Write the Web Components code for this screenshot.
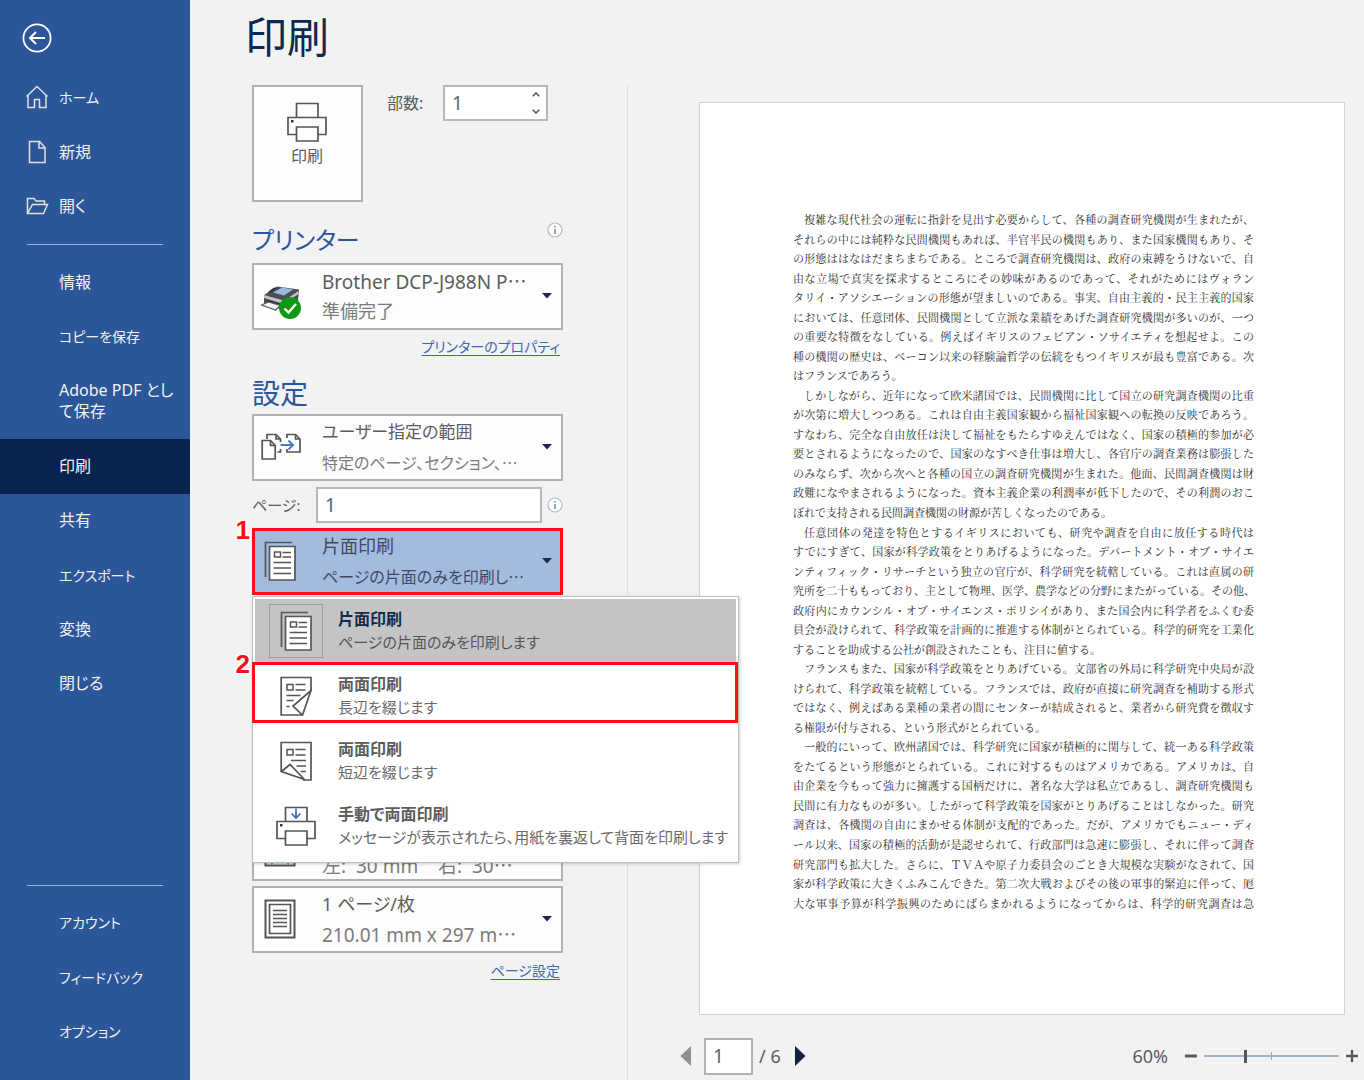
<!DOCTYPE html>
<html lang="ja">
<head>
<meta charset="utf-8">
<title>印刷</title>
<style>
html, body { margin: 0; height: 100%; }
body {
  font-family: "Noto Sans", "Noto Sans CJK JP", sans-serif;
  font-size: 16px;
  font-feature-settings: "palt";
  color: #5c5c5c;
  background: #f2f2f2;
}
</style>
</head>
<body>
<print-backstage></print-backstage>

<script>
const define = (name, html, setup) => {
  const template = document.createElement('template');
  template.innerHTML = html;
  customElements.define(name, class extends HTMLElement {
    constructor() {
      super();
      this.attachShadow({ mode: 'open' }).append(template.content.cloneNode(true));
    }
    connectedCallback() { if (setup) setup(this, this.shadowRoot); }
  });
};

/* ---------- icons ---------- */
const ICONS = {
  back: [30, 30, `<g stroke="#fff" stroke-width="1.8"><circle cx="15" cy="15" r="13.6"/><path d="M23 15H8M14 9l-6 6 6 6" stroke-width="2"/></g>`],
  home: [24, 24, `<path d="M1.500 11.500L12 1.500l10.500 10M3 10.500V22.500h6.500V14.500h5V22.500h6.500V10.500" stroke="#e3e0dc" stroke-width="1.500"/>`],
  file: [24, 24, `<path d="M4.500 1.500h10l5.500 6v15h-15.500zM14 1.500v6.500h6" stroke="#e3e0dc" stroke-width="1.500"/>`],
  folder: [24, 24, `<path d="M2.500 18.500V3.500h6.500l2 2.500h8.500v3.500M2.500 18.500l5-9h15l-4 9z" stroke="#e3e0dc" stroke-width="1.500"/>`],
  print: [40, 40, `<g stroke="#555" stroke-width="1.700" fill="#fdfdfd"><path d="M9.500 15V1.500h21.500V15"/><path d="M1 15.500h38v17H1z"/><path d="M9.500 25h21.500v14H9.500z"/></g><path d="M4 18h2.500v2.500H4z" fill="#333"/>`],
  manual: [40, 40, `<g stroke="#555" stroke-width="1.700" fill="#fff"><path d="M9.500 15V1.500h21.500V15"/><path d="M1 15.500h38v17H1z"/><path d="M9.500 25h21.500v14H9.500z"/></g><path d="M4 18h2.500v2.500H4z" fill="#333"/><path d="M20 2.500v9M15.500 7.500l4.500 4.500 4.500-4.500" stroke="#3e6db5" stroke-width="1.700"/>`],
  device: [44, 48, `<g transform="translate(-1 12)"><path d="M4 11L17 2.500 39 5.500 38 17 24 26 4 20z" fill="#4b4f55"/><path d="M4 11l20 5.500L38.500 7v3L24 20 4 14z" fill="#bfc3c7"/><path d="M13 8.500l9-5 11 2-9 6z" fill="#9db9de"/><path d="M8 8l6-4.500 3 .5-7 5z" fill="#2c2f34"/><path d="M7 16l14 4v4L7 19z" fill="#25282d"/><path d="M1.500 21l7-3 12 3.500-5 4.500z" fill="#f4f4f4" stroke="#5a5d60" stroke-width="1.300"/><circle cx="30" cy="24" r="11" fill="#0d9a12"/><path d="M24.500 24.500l4 4 7.500-8.500" stroke="#fff" stroke-width="2.400"/></g>`],
  range: [40, 30, `<g stroke="#555" stroke-width="1.700"><path d="M6 7V2.500h9l4.500 4.500v3M15 2.500V7h4.500M16.500 20h3v-3"/><path d="M1.200 8.500h8.300l4.700 5v13.500h-13z" fill="#fdfdfd"/><path d="M9.500 8.500v5h4.700"/><path d="M26 6V2.500h8.500l4.500 4.500v13h-13v-3M34.500 2.500V7H39"/></g><path d="M19.500 13h12.500M27.500 8.500l4.500 4.500-4.500 4.500" stroke="#4a78bd" stroke-width="1.900"/>`],
  single: [32, 40, `<g stroke="#555" stroke-width="1.700"><path d="M28 1.500H1.500V36"/><path d="M5.500 5.500h25.500v33.500H5.500z" fill="#fff"/><path d="M10.500 11h6v5h-6z" stroke-width="1.500"/><path d="M18.500 11.500h8.500M18.500 16h8.500M9.500 21.500h17.500M9.500 27h17.500M9.500 32.500h17.500" stroke-width="1.500"/></g>`],
  longedge: [32, 40, `<g stroke="#555" stroke-width="1.700"><path d="M31 14V1.500H1.200V39H22.500"/><path d="M7 8.500h6v5.500H7z" stroke-width="1.500"/><path d="M15.500 8.500h10M15.500 14h10M6.500 19.500h14M6.500 24.500h7M6.500 30.500h3" stroke-width="1.500"/><path d="M31 14.500L13 30l9.500 9z" fill="#fff"/></g>`],
  shortedge: [32, 40, `<g stroke="#555" stroke-width="1.700"><path d="M1.200 30V1.500H31V39H23"/><path d="M7 8.500h6v5.500H7z" stroke-width="1.500"/><path d="M15.500 8.500h10M15.500 14h10M11 19.500h15M16.500 25h9.500M20.500 30.500h5.500" stroke-width="1.500"/><path d="M1.500 30.500L10 23.500 24.500 38.500z" fill="#fff"/></g>`],
  sheet: [32, 40, `<g stroke="#555"><path d="M1.500 1.500h29v37h-29z" stroke-width="2"/><path d="M5.500 5.500h21v29h-21z" stroke-width="1.700"/><path d="M9 11.500h14M9 15.500h14M9 19.500h14M9 23.500h14M9 27.500h14" stroke-width="1.500"/></g>`],
  margins: [32, 40, `<path d="M1.500 1.500h29v37h-29z" stroke="#555" stroke-width="2"/><path d="M8 1.500v36M24 1.500v36M2.500 35.500h27" stroke="#4a78bd" stroke-width="1.500"/>`],
  info: [16, 16, `<circle cx="8" cy="8" r="7" stroke="#b5b9be" stroke-width="1.200" fill="#fff"/><path d="M8 7v5M8 4v1.600" stroke="#5b86c4" stroke-width="1.400"/>`],
  caret: [10, 6, `<path d="M0 0h10L5 5.500z" fill="#1c2b45"/>`],
  up: [8, 5, `<path d="M.8 4.200L4 1l3.200 3.200" stroke="#555" stroke-width="1.500"/>`],
  down: [8, 5, `<path d="M.8 .8L4 4 7.200.8" stroke="#555" stroke-width="1.500"/>`],
  prev: [12, 22, `<path d="M11 1v20L.5 11z" fill="#8f8f8f"/>`],
  next: [12, 22, `<path d="M1 1v20l10.500-10z" fill="#12233f"/>`],
  minus: [14, 14, `<path d="M1 7h12" stroke="#5c5c5c" stroke-width="3"/>`],
  plus: [14, 14, `<path d="M1 7h12M7 1v12" stroke="#5c5c5c" stroke-width="2.400"/>`],
};
define('ui-icon', `<style>:host{display:block;flex:none}svg{display:block}</style>`, (host, root) => {
  const [w, h, body] = ICONS[host.getAttribute('name')];
  root.innerHTML += `<svg width="${w}" height="${h}" viewBox="0 0 ${w} ${h}" fill="none" aria-hidden="true">${body}</svg>`;
});

/* ---------- shared small parts ---------- */
define('step-mark', `
<style>
:host { position: absolute; inset: var(--mark-inset, 0); border: 3px solid #fb0f14; pointer-events: none; z-index: 3; }
span { position: absolute; right: calc(100% + 5px); top: -15px; font: bold 26px/28px "Liberation Sans", sans-serif; color: #fb0f14;
  text-shadow: 1px 1px #fff, -1px -1px #fff, 1px -1px #fff, -1px 1px #fff, 0 2px #fff, 2px 0 #fff, -2px 0 #fff; }
</style><span><slot></slot></span>`);

define('section-title', `
<style>
:host { display: flex; justify-content: space-between; height: 36px; }
h2 { margin: 0; font-size: var(--size, 28px); line-height: 36px; font-weight: 400; color: #2b579a; }
</style><h2><slot></slot></h2><slot name="aside"></slot>`);

define('text-link', `
<style>
:host { display: flex; justify-content: flex-end; padding-right: 3px; }
a { color: #3b69b0; font-size: 14px; line-height: 22px; text-decoration: underline; text-underline-offset: 3px; }
</style><a href="#"><slot></slot></a>`);

/* ---------- sidebar ---------- */
define('nav-item', `
<style>
:host { display: flex; flex: 1 1 54px; }
:host([tall]) { flex-basis: 75px; }
a { flex: 1; display: flex; align-items: center; color: #f4f1ec; text-decoration: none; font-size: 16px; line-height: 21px; padding-right: 14px; }
:host([kana]) a { font-size: 14px; }
:host([selected]) a { background: #08234d; }
.icon { width: 59px; box-sizing: border-box; padding-left: 25px; flex: none; }
</style>
<a href="#"><span class="icon"></span><span><slot></slot></span></a>`, (host, root) => {
  const name = host.getAttribute('icon');
  if (name) root.querySelector('.icon').innerHTML = `<ui-icon name="${name}"></ui-icon>`;
  if (host.hasAttribute('selected')) root.querySelector('a').setAttribute('aria-current', 'page');
});

define('side-bar', `
<style>
:host { display: block; background: #2b579a; }
nav { display: flex; flex-direction: column; min-height: 100%; box-sizing: border-box; padding: 23px 0 21px; }
button { align-self: flex-start; margin: 0 0 17px 22px; padding: 0; border: 0; background: none; height: 30px; }
.group { display: flex; flex-direction: column; height: 164px; }
.main { height: 456px; }
hr { width: 136px; margin: 10px 0 10px 27px; border: 0; border-top: 1px solid #9db3d4; align-self: flex-start; }
.end { margin-top: auto; margin-bottom: 9px; }
</style>
<nav>
  <button aria-label="戻る"><ui-icon name="back"></ui-icon></button>
  <div class="group">
    <nav-item kana icon="home">ホーム</nav-item>
    <nav-item icon="file">新規</nav-item>
    <nav-item icon="folder">開く</nav-item>
  </div>
  <hr>
  <div class="group main">
    <nav-item>情報</nav-item>
    <nav-item kana>コピーを保存</nav-item>
    <nav-item tall>Adobe PDF とし<br>て保存</nav-item>
    <nav-item selected>印刷</nav-item>
    <nav-item>共有</nav-item>
    <nav-item kana>エクスポート</nav-item>
    <nav-item>変換</nav-item>
    <nav-item>閉じる</nav-item>
  </div>
  <hr class="end">
  <div class="group">
    <nav-item kana>アカウント</nav-item>
    <nav-item kana>フィードバック</nav-item>
    <nav-item kana>オプション</nav-item>
  </div>
</nav>`);

/* ---------- settings ---------- */
define('option-box', `
<style>
:host { display: block; position: relative; }
button { display: flex; align-items: center; width: 100%; height: 67px; box-sizing: border-box; padding: 0 9px 2px 0; border: 2px solid #b1b1b1; background: #fdfdfd;
  font: inherit; font-feature-settings: inherit; font-size: var(--title-size, 18px); line-height: 30px; color: #5c5c5c; text-align: left; }
:host([open]) button { background: #a4bbe0; border-color: #a4bbe0; color: #3f4a5e; }
.icon { width: 68px; display: flex; flex: none; box-sizing: border-box; padding-left: var(--icon-left, 10px); }
.text { flex: 1; min-width: 0; white-space: pre; }
.text > span { display: block; height: 30px; }
.text > .sub { color: #7b7b7b; font-size: var(--sub-size, 16px); line-height: var(--sub-line, 30px); }
:host([open]) .text > .sub { color: #3f4a5e; }
.dots { font-family: "Noto Sans CJK JP", sans-serif; }
</style>
<button aria-haspopup="listbox">
  <span class="icon"></span>
  <span class="text"><span><slot></slot><span class="dots t">…</span></span><span class="sub"><slot name="sub"></slot><span class="dots s">…</span></span></span>
  <ui-icon name="caret"></ui-icon>
</button>
<slot name="over"></slot>`, (host, root) => {
  root.querySelector('.icon').innerHTML = `<ui-icon name="${host.getAttribute('icon')}"></ui-icon>`;
  const cut = host.getAttribute('cut');
  for (const name of ['t', 's']) {
    if (cut !== name) root.querySelector('.' + name).remove();
  }
  root.querySelector('button').setAttribute('aria-expanded', host.hasAttribute('open'));
});

define('menu-option', `
<style>
:host { display: block; position: relative; }
button { display: flex; align-items: center; width: 100%; height: 65px; padding: 0 0 1px; border: 0; background: none; font: inherit; font-feature-settings: inherit;
  font-size: 16px; line-height: 23px; text-align: left; color: #6a6a6a; white-space: nowrap; }
:host([selected]) button { background: #c4c4c4; }
.icon { flex: none; width: 54px; height: 54px; margin: 0 15px 0 14px; box-sizing: border-box; border: 1px solid transparent; display: flex; align-items: center; justify-content: center; }
:host([selected]) .icon { border-color: #9d9d9d; }
b, .sub { display: block; }
.sub { font-size: 15px; }
b { color: #5c5c5c; }
:host([selected]) b { color: #14294d; }
:host([selected]) .sub { color: #555; }
</style>
<button role="option"><span class="icon"></span><span><b><slot></slot></b><span class="sub"><slot name="sub"></slot></span></span></button>
<slot name="over"></slot>`, (host, root) => {
  root.querySelector('.icon').innerHTML = `<ui-icon name="${host.getAttribute('icon')}"></ui-icon>`;
  root.querySelector('button').setAttribute('aria-selected', host.hasAttribute('selected'));
});

define('duplex-menu', `
<style>
:host { position: absolute; top: 100%; left: 0; z-index: 2; }
div { width: 487px; margin-top: 1px; box-sizing: border-box; padding: 2px 2px 3px; border: 1px solid #bdbdbd; background: #fff; box-shadow: 1px 1px 3px #0003; }
step-mark { --mark-inset: -2px -2px 6px -3px; }
</style>
<div role="listbox">
  <menu-option icon="single" selected>片面印刷<span slot="sub">ページの片面のみを印刷します</span></menu-option>
  <menu-option icon="longedge">両面印刷<span slot="sub">長辺を綴じます</span><step-mark slot="over">2</step-mark></menu-option>
  <menu-option icon="shortedge">両面印刷<span slot="sub">短辺を綴じます</span></menu-option>
  <menu-option icon="manual">手動で両面印刷<span slot="sub">メッセージが表示されたら、用紙を裏返して背面を印刷します</span></menu-option>
</div>`);

define('print-settings', `
<style>
:host { display: block; width: 311px; }
.top { display: flex; align-items: flex-start; margin-bottom: 20px; }
.print { width: 111px; height: 117px; margin-right: 24px; box-sizing: border-box; border: 2px solid #b1b1b1; background: #fdfdfd; padding: 0 1px 18px 0;
  display: flex; flex-direction: column; align-items: center; justify-content: center; gap: 2px; font: inherit; font-size: 16px; line-height: 24px; color: #5c5c5c; }
label { font-size: 16px; line-height: 36px; color: #5c5c5c; flex: none; }
.copies { width: 56px; }
.field { display: flex; align-items: center; box-sizing: border-box; height: 36px; border: 2px solid #b8b8b8; background: #fff; padding-left: 7px; }
.spin { width: 105px; }
input { flex: 1; min-width: 0; width: 0; padding: 0; border: 0; outline: 0; background: none; font: inherit; font-size: 19px; color: #56647c; }
.arrows { display: flex; flex-direction: column; gap: 12px; padding-right: 6px; }
.arrows button { display: block; padding: 0; border: 0; background: none; }
.pages { display: flex; align-items: center; margin: 6px 0 5px; }
.pages label { width: 64px; font-size: 15px; }
.pages .field { flex: 1; margin-right: 5px; }
.printer-title { --size: 24px; margin-bottom: 5px; }
.settings-title { margin-bottom: 3px; }
.printer { --icon-left: 7px; --title-size: 19px; --sub-size: 18px; }
.range { --icon-left: 7px; --title-size: 17px; }
.margins { margin-top: 219px; --sub-size: 19px; --sub-line: 36px; }
.perpage { margin-top: 5px; --sub-size: 19px; }
.prop { margin: 6px 0 17px; }
.setup { margin-top: 7px; }
</style>
<div class="top">
  <button class="print"><ui-icon name="print"></ui-icon>印刷</button>
  <label class="copies" for="copies">部数:</label>
  <div class="field spin"><input id="copies" value="1" inputmode="numeric">
    <span class="arrows"><button aria-label="増やす"><ui-icon name="up"></ui-icon></button><button aria-label="減らす"><ui-icon name="down"></ui-icon></button></span></div>
</div>
<section-title class="printer-title">プリンター<ui-icon slot="aside" name="info"></ui-icon></section-title>
<option-box class="printer" icon="device" cut="t">Brother DCP-J988N P<span slot="sub">準備完了</span></option-box>
<text-link class="prop">プリンターのプロパティ</text-link>
<section-title class="settings-title">設定</section-title>
<option-box class="range" icon="range" cut="s">ユーザー指定の範囲<span slot="sub">特定のページ、セクション、</span></option-box>
<div class="pages"><label for="pages">ページ:</label><div class="field"><input id="pages" value="1"></div><ui-icon name="info"></ui-icon></div>
<option-box icon="single" cut="s" open>片面印刷<span slot="sub">ページの片面のみを印刷し</span>
  <step-mark slot="over">1</step-mark>
  <duplex-menu slot="over"></duplex-menu>
</option-box>
<option-box class="margins" icon="margins" cut="s"><span slot="sub">左:  30 mm    右:  30</span></option-box>
<option-box class="perpage" icon="sheet" cut="s">1 ページ/枚<span slot="sub">210.01 mm x 297 m</span></option-box>
<text-link class="setup">ページ設定</text-link>`);

/* ---------- preview ---------- */
const PARAGRAPHS = [
  ['複雑な現代社会の運転に指針を見出す必要からして、各種の調査研究機関が生まれたが、', 'それらの中には純粋な民間機関もあれば、半官半民の機関もあり、また国家機関もあり、そ', 'の形態ははなはだまちまちである。ところで調査研究機関は、政府の束縛をうけないで、自', '由な立場で真実を探求するところにその妙味があるのであって、それがためにはヴォラン', 'タリイ・アソシエーションの形態が望ましいのである。事実、自由主義的・民主主義的国家', 'においては、任意団体、民間機関として立派な業績をあげた調査研究機関が多いのが、一つ', 'の重要な特徴をなしている。例えばイギリスのフェビアン・ソサイエティを想起せよ。この', '種の機関の歴史は、ベーコン以来の経験論哲学の伝統をもつイギリスが最も豊富である。次', 'はフランスであろう。'],
  ['しかしながら、近年になって欧米諸国では、民間機関に比して国立の研究調査機関の比重', 'が次第に増大しつつある。これは自由主義国家観から福祉国家観への転換の反映であろう。', 'すなわち、完全な自由放任は決して福祉をもたらすゆえんではなく、国家の積極的参加が必', '要とされるようになったので、国家のなすべき仕事は増大し、各官庁の調査業務は膨張した', 'のみならず、次から次へと各種の国立の調査研究機関が生まれた。他面、民間調査機関は財', '政難になやまされるようになった。資本主義企業の利潤率が低下したので、その利潤のおこ', 'ぼれで支持される民間調査機関の財源が苦しくなったのである。'],
  ['任意団体の発達を特色とするイギリスにおいても、研究や調査を自由に放任する時代は', 'すでにすぎて、国家が科学政策をとりあげるようになった。デパートメント・オブ・サイエ', 'ンティフィック・リサーチという独立の官庁が、科学研究を統轄している。これは直属の研', '究所を二十ももっており、主として物理、医学、農学などの分野にまたがっている。その他、', '政府内にカウンシル・オブ・サイエンス・ポリシイがあり、また国会内に科学者をふくむ委', '員会が設けられて、科学政策を計画的に推進する体制がとられている。科学的研究を工業化', 'することを助成する公社が創設されたことも、注目に値する。'],
  ['フランスもまた、国家が科学政策をとりあげている。文部省の外局に科学研究中央局が設', 'けられて、科学政策を統轄している。フランスでは、政府が直接に研究調査を補助する形式', 'ではなく、例えばある業種の業者の間にセンターが結成されると、業者から研究費を徴収す', 'る権限が付与される、という形式がとられている。'],
  ['一般的にいって、欧州諸国では、科学研究に国家が積極的に関与して、統一ある科学政策', 'をたてるという形態がとられている。これに対するものはアメリカである。アメリカは、自', '由企業を今もって強力に擁護する国柄だけに、著名な大学は私立であるし、調査研究機関も', '民間に有力なものが多い。したがって科学政策を国家がとりあげることはしなかった。研究', '調査は、各機関の自由にまかせる体制が支配的であった。だが、アメリカでもニュー・ディ', 'ール以来、国家の積極的活動が是認せられて、行政部門は急速に膨張し、それに伴って調査', '研究部門も拡大した。さらに、ＴＶＡや原子力委員会のごとき大規模な実験がなされて、国', '家が科学政策に大きくふみこんできた。第二次大戦およびその後の軍事的緊迫に伴って、厖', '大な軍事予算が科学振興のためにばらまかれるようになってからは、科学的研究調査は急'],
];
define('page-sheet', `
<style>
:host { display: block; }
article { height: 100%; box-sizing: border-box; padding: 107px 90px 101px 93px; background: #fff; border: 1px solid #d2d2d2;
  display: flex; flex-direction: column; justify-content: space-between;
  font-family: "Noto Serif CJK JP", "Noto Sans CJK JP", serif; font-size: 11px; font-weight: 400; line-height: 19px; font-feature-settings: normal; color: #2e2e2e; }
p { display: contents; }
span { display: block; white-space: nowrap; text-align: justify; text-align-last: justify; }
span.first { padding-left: 11px; }
span.last { text-align-last: left; }
</style><article></article>`, (host, root) => {
  root.querySelector('article').innerHTML = PARAGRAPHS.map((lines, p) => '<p>' + lines.map((line, i) => {
    const last = i === lines.length - 1 && p < PARAGRAPHS.length - 1;
    return `<span class="${i === 0 ? 'first' : last ? 'last' : ''}">${line}</span>`;
  }).join('') + '</p>').join('');
});

define('preview-footer', `
<style>
:host { display: flex; align-items: center; height: 38px; font-size: 18px; color: #5c5c5c; }
button { padding: 0; border: 0; background: none; display: block; }
.page { width: 49px; height: 37px; box-sizing: border-box; margin: 0 6px 0 12px; border: 2px solid #b1b1b1; background: #fff; padding: 0 0 0 7px; font: inherit; font-size: 19px; color: #56647c; }
.next { margin-left: 13px; }
.zoom { margin-left: auto; display: flex; align-items: center; }
label { margin-right: 16px; }
input[type=range] { appearance: none; width: 135px; height: 16px; margin: 0 6px; outline: 0;
  background: linear-gradient(#8fa3bd, #8fa3bd) 67px 50% / 1px 8px no-repeat, linear-gradient(#9fb2cc, #9fb2cc) 0 50% / 100% 2px no-repeat; }
input[type=range]::-webkit-slider-thumb { appearance: none; width: 3px; height: 13px; background: #555; border: 0; }
</style>
<button aria-label="前のページ"><ui-icon name="prev"></ui-icon></button>
<input class="page" aria-label="ページ番号" value="1"><span>/ 6</span>
<button class="next" aria-label="次のページ"><ui-icon name="next"></ui-icon></button>
<div class="zoom"><label for="zoom">60%</label>
  <button aria-label="縮小"><ui-icon name="minus"></ui-icon></button>
  <input id="zoom" type="range" min="0" max="100" value="30">
  <button aria-label="拡大"><ui-icon name="plus"></ui-icon></button></div>`);

define('print-backstage', `
<style>
:host { display: grid; grid-template-columns: 190px minmax(0, 1fr); min-height: 100vh; }
main { display: flex; flex-direction: column; }
h1 { margin: 0; height: 85px; padding-left: 55px; font-size: 42px; line-height: 74px; font-weight: 400; color: #0d2850; box-sizing: border-box; }
.body { flex: 1; display: flex; }
.settings { width: 438px; box-sizing: border-box; padding-left: 62px; flex: none; border-right: 1px solid #dedede; }
.preview { flex: 1; min-width: 0; box-sizing: border-box; display: flex; flex-direction: column; padding: 17px 5px 5px 52px; }
page-sheet { flex: 1; margin: 0 14px 22px 19px; }
</style>
<side-bar></side-bar>
<main>
  <h1>印刷</h1>
  <div class="body">
    <div class="settings"><print-settings></print-settings></div>
    <div class="preview"><page-sheet></page-sheet><preview-footer></preview-footer></div>
  </div>
</main>`);
</script>
</body>
</html>
